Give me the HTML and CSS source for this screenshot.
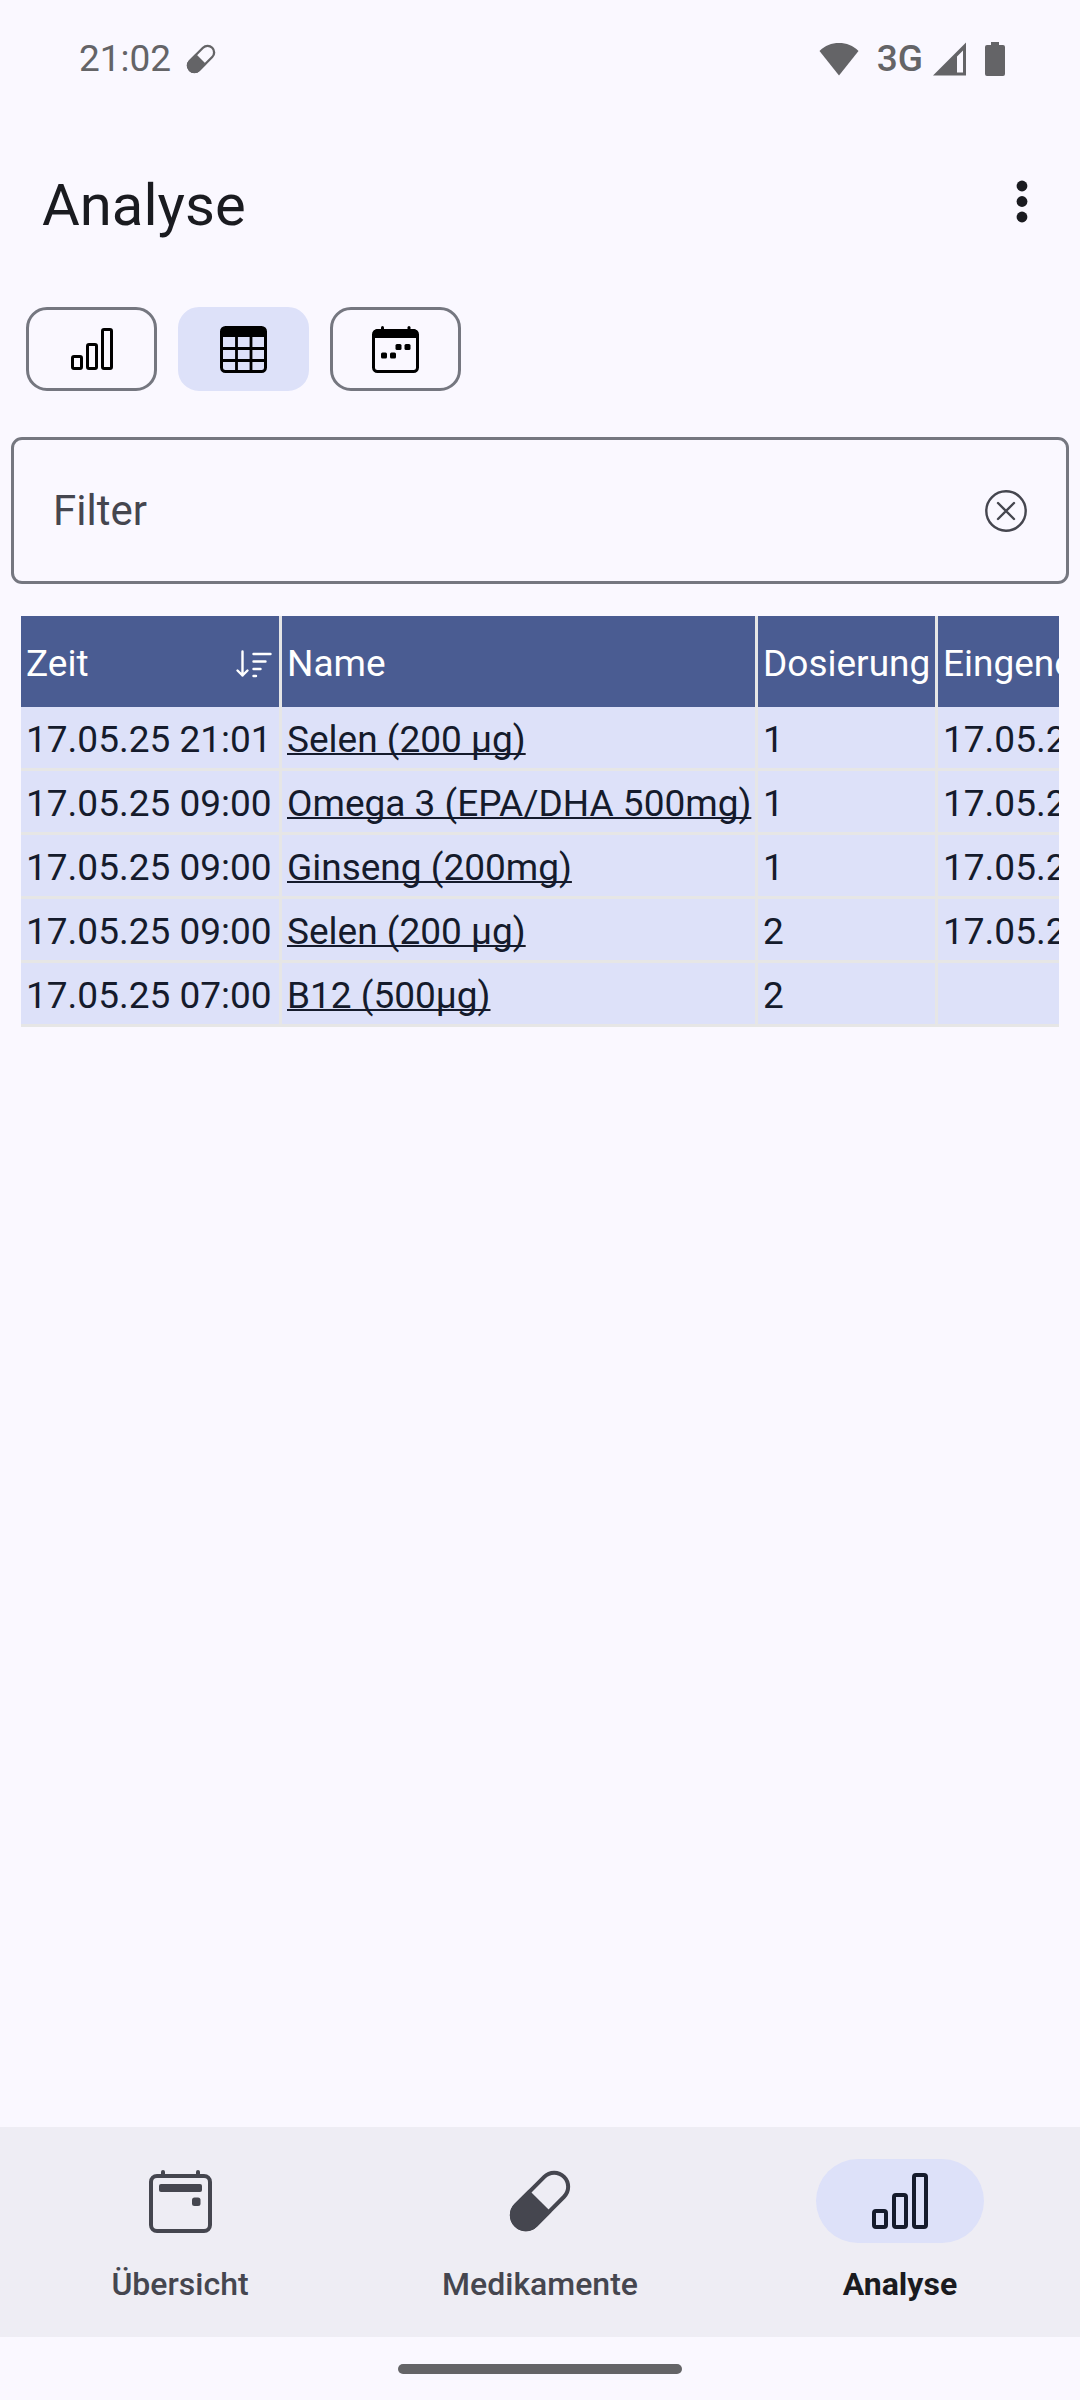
FILE: index.html
```html
<!DOCTYPE html>
<html lang="de">
  <head>
    <meta charset="UTF-8" />
    <meta name="viewport" content="width=device-width, initial-scale=1.0" />
    <title>Analyse</title>
    <link rel="stylesheet" href="styles.css" />
  </head>
  <body>
    <div class="statusbar">
      <span class="time">21:02</span>
      <svg class="pill_small" width="28" height="28" viewBox="0 0 60 60">
        <g transform="rotate(45 30 30)">
          <rect x="16" y="-4" width="28" height="68" rx="14" fill="none" stroke="currentColor" stroke-width="5" />
          <path d="M14 30h32v20a16 16 0 0 1-32 0z" fill="currentColor" />
        </g>
      </svg>
      <div class="status_right">
        <svg class="wifi" width="40" height="34" viewBox="0 0 40 34" fill="currentColor">
          <path d="M20 33.500L0.500 9C6 3.500 12.500 1 20 1s14 2.500 19.500 8z" />
        </svg>
        <span class="network">3G</span>
        <svg class="signal" width="33" height="34" viewBox="0 0 33 34" fill="currentColor">
          <path fill-rule="evenodd" d="M33 0.500V33.500H0zM30 8.500L24 14.500V30.500H30z" />
        </svg>
        <svg width="20" height="34" viewBox="0 0 20 34" fill="currentColor">
          <path d="M6 0h8v3h4a2 2 0 0 1 2 2v27a2 2 0 0 1-2 2H2a2 2 0 0 1-2-2V5a2 2 0 0 1 2-2h4z" />
        </svg>
      </div>
    </div>

    <header class="appbar">
      <h1>Analyse</h1>
      <button class="icon_btn" aria-label="Menü">
        <svg width="12" height="44" viewBox="0 0 12 44" fill="currentColor">
          <circle cx="6" cy="6" r="5.400" />
          <circle cx="6" cy="21.500" r="5.400" />
          <circle cx="6" cy="37" r="5.400" />
        </svg>
      </button>
    </header>

    <main>
      <div class="chips">
        <button class="chip" aria-label="Diagramm">
          <svg width="42" height="42" viewBox="0 0 56 56" fill="none" stroke="currentColor" stroke-width="4">
            <rect x="2" y="38" width="12" height="16" rx="2" />
            <rect x="22" y="22" width="12" height="32" rx="2" />
            <rect x="42" y="2" width="12" height="52" rx="2" />
          </svg>
        </button>
        <button class="chip active" aria-label="Tabelle">
          <svg width="47" height="47" viewBox="0 0 47 47" fill="none" stroke="currentColor">
            <rect x="1.500" y="1.500" width="44" height="44" rx="4" stroke-width="3" />
            <path d="M1 11V6a5 5 0 0 1 5-5h35a5 5 0 0 1 5 5v5z" fill="currentColor" stroke="none" />
            <path d="M2 22.500h43M2 34.500h43M16.500 11v34M31 11v34" stroke-width="2.800" />
          </svg>
        </button>
        <button class="chip" aria-label="Kalender">
          <svg width="47" height="47" viewBox="0 0 47 47" fill="currentColor">
            <rect x="1.500" y="4.500" width="44" height="41" rx="4" fill="none" stroke="currentColor" stroke-width="3" />
            <path d="M1 12V8a5 5 0 0 1 5-5h35a5 5 0 0 1 5 5v4z" />
            <rect x="9" y="0" width="3" height="6" rx="1.500" />
            <rect x="35.500" y="0" width="3" height="6" rx="1.500" />
            <rect x="23.500" y="18" width="6" height="6" rx="1.500" />
            <rect x="32.500" y="18" width="6" height="6" rx="1.500" />
            <rect x="9" y="26.500" width="6" height="6" rx="1.500" />
            <rect x="18" y="26.500" width="6" height="6" rx="1.500" />
          </svg>
        </button>
      </div>

      <div class="filter">
        <input type="text" id="filter" placeholder="Filter" aria-label="Filter" />
        <button class="icon_btn" aria-label="Filter löschen">
          <svg width="42" height="42" viewBox="0 0 42 42" fill="none" stroke="currentColor" stroke-linecap="round">
            <circle cx="21" cy="21" r="19.700" stroke-width="2.400" />
            <path d="M13 13l16 16M29 13L13 29" stroke-width="2.400" />
          </svg>
        </button>
      </div>

      <div class="table_wrap">
        <table>
          <colgroup>
            <col class="c_zeit" />
            <col class="c_name" />
            <col class="c_dosis" />
            <col class="c_ein" />
          </colgroup>
          <thead>
            <tr>
              <th>
                <div class="sort">
                  Zeit
                  <svg width="36" height="28" viewBox="0 0 36 28" fill="none" stroke="currentColor" stroke-width="2.400" stroke-linecap="round" stroke-linejoin="round">
                    <path d="M6.500 1.500v24M1.500 20.500l5 5 5-5" />
                    <path d="M17.500 4h17M17.500 11.500h12M17.500 19h7M17.500 26h2.500" />
                  </svg>
                </div>
              </th>
              <th>Name</th>
              <th>Dosierung</th>
              <th>Eingenommen</th>
            </tr>
          </thead>
          <tbody>
            <tr>
              <td>17.05.25 21:01</td>
              <td><a href="#">Selen (200 µg)</a></td>
              <td>1</td>
              <td>17.05.25 21:01</td>
            </tr>
            <tr>
              <td>17.05.25 09:00</td>
              <td><a href="#">Omega 3 (EPA/DHA 500mg)</a></td>
              <td>1</td>
              <td>17.05.25 21:01</td>
            </tr>
            <tr>
              <td>17.05.25 09:00</td>
              <td><a href="#">Ginseng (200mg)</a></td>
              <td>1</td>
              <td>17.05.25 21:01</td>
            </tr>
            <tr>
              <td>17.05.25 09:00</td>
              <td><a href="#">Selen (200 µg)</a></td>
              <td>2</td>
              <td>17.05.25 21:01</td>
            </tr>
            <tr>
              <td>17.05.25 07:00</td>
              <td><a href="#">B12 (500µg)</a></td>
              <td>2</td>
              <td></td>
            </tr>
          </tbody>
        </table>
      </div>
    </main>

    <nav class="bottom_nav">
      <a href="#">
        <span class="nav_icon">
          <svg width="63" height="63" viewBox="0 0 63 63" fill="currentColor">
            <rect x="2" y="6" width="59" height="55" rx="6" fill="none" stroke="currentColor" stroke-width="4" />
            <rect x="12" y="0" width="4" height="8" rx="2" />
            <rect x="47" y="0" width="4" height="8" rx="2" />
            <rect x="10" y="14" width="43" height="8" rx="2" />
            <rect x="43" y="27.500" width="8.500" height="8.500" rx="2.500" />
          </svg>
        </span>
        Übersicht
      </a>
      <a href="#">
        <span class="nav_icon">
          <svg width="60" height="60" viewBox="0 0 60 60">
            <g transform="rotate(45 30 30)">
              <rect x="16" y="-4" width="28" height="68" rx="14" fill="none" stroke="currentColor" stroke-width="4" />
              <path d="M14 30h32v20a16 16 0 0 1-32 0z" fill="currentColor" />
            </g>
          </svg>
        </span>
        Medikamente
      </a>
      <a href="#" class="active">
        <span class="nav_icon">
          <svg width="56" height="56" viewBox="0 0 56 56" fill="none" stroke="currentColor" stroke-width="4">
            <rect x="2" y="38" width="12" height="16" rx="2" />
            <rect x="22" y="22" width="12" height="32" rx="2" />
            <rect x="42" y="2" width="12" height="52" rx="2" />
          </svg>
        </span>
        Analyse
      </a>
    </nav>
    <div class="gesture"><span></span></div>
  </body>
</html>
```
FILE: styles.css
```css
* {
  box-sizing: border-box;
  padding: 0;
  margin: 0;
}
body {
  display: flex;
  flex-direction: column;
  min-height: 100vh;
  font-family: Roboto, "Noto Sans", sans-serif;
  font-size: 37px;
  line-height: 52px;
  background-color: #faf8ff;
  color: #1a1b20;
}
button {
  border: none;
  background: none;
  color: inherit;
  cursor: pointer;
}
svg {
  display: block;
  flex-shrink: 0;
  overflow: visible;
}
a {
  color: inherit;
}

/* status bar */
.statusbar {
  display: flex;
  align-items: center;
  height: 118px;
  padding: 0 75px 0 79px;
  color: #646467;
}
.pill_small {
  margin-left: 16px;
}
.status_right {
  display: flex;
  align-items: center;
  margin-left: auto;
}
.network {
  margin: 0 10px 0 18px;
  font-weight: 500;
}
.signal {
  margin-right: 19px;
}

.appbar {
  display: flex;
  align-items: center;
  justify-content: space-between;
  height: 168px;
  padding: 0 42px;
}
.appbar h1 {
  padding-top: 6px;
  font-size: 58px;
  font-weight: 400;
  line-height: 74px;
}
.icon_btn {
  display: flex;
  align-items: center;
  justify-content: center;
  min-width: 32px;
  height: 84px;
}

main {
  flex: 1;
}
.chips {
  display: flex;
  gap: 21px;
  padding: 21px 26px 46px;
}
.chip {
  display: flex;
  align-items: center;
  justify-content: center;
  width: 131px;
  height: 84px;
  border: 3px solid #757780;
  border-radius: 21px;
  color: #000;
}
.chip.active {
  border-color: #dde1f9;
  background-color: #dde1f9;
}

.filter {
  display: flex;
  align-items: center;
  height: 147px;
  margin: 0 11px 32px;
  padding: 0 39px;
  border: 3px solid #757780;
  border-radius: 11px;
  color: #45464f;
}
.filter input {
  flex: 1;
  min-width: 0;
  height: 100%;
  border: none;
  outline: none;
  background: none;
  font-family: inherit;
  font-size: 42px;
  color: #1a1b20;
}
.filter input::placeholder {
  color: #45464f;
  opacity: 1;
}

/* table scrolls sideways */
.table_wrap {
  margin: 0 21px;
  overflow: hidden;
}
table {
  width: 1200px;
  table-layout: fixed;
  border-spacing: 0;
  white-space: nowrap;
}
.c_zeit {
  width: 261px;
}
.c_name {
  width: 476px;
}
.c_dosis {
  width: 180px;
}
th,
td {
  text-align: left;
  border-right: 3px solid #e6e6e6;
}
th {
  padding: 22px 5px 17px;
  font-weight: 400;
  background-color: #4a5c92;
  color: #fff;
}
td {
  height: 64px;
  padding: 7px 5px 2px;
  border-bottom: 3px solid #e6e6e6;
  background-color: #dde1f9;
  color: #151b2c;
}
td a {
  text-decoration-thickness: 2px;
  text-decoration-skip-ink: none;
}
.sort {
  display: flex;
  align-items: center;
  justify-content: space-between;
  padding-right: 2px;
}

.bottom_nav {
  display: flex;
  padding: 32px 0;
  background-color: #eeedf4;
}
.bottom_nav a {
  flex: 1;
  display: flex;
  flex-direction: column;
  align-items: center;
  gap: 20px;
  font-size: 32px;
  font-weight: 500;
  line-height: 42px;
  text-decoration: none;
  color: #45464f;
}
.bottom_nav a.active {
  font-weight: 700;
  color: #1a1b20;
}
.nav_icon {
  display: flex;
  align-items: center;
  justify-content: center;
  width: 168px;
  height: 84px;
  border-radius: 42px;
}
.active .nav_icon {
  background-color: #dde1f9;
  color: #151b2c;
}
.gesture {
  display: flex;
  align-items: center;
  justify-content: center;
  height: 63px;
}
.gesture span {
  width: 284px;
  height: 10px;
  border-radius: 5px;
  background-color: #646467;
}
```
